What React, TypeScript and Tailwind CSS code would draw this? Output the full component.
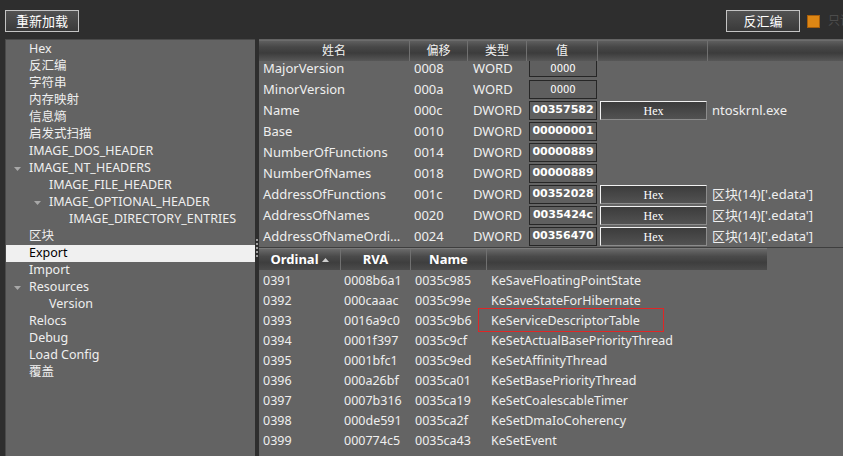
import React from 'react';

type Node = { label: string; level: number; open?: boolean; selected?: boolean };

const tree: Node[] = [
  { label: 'Hex', level: 0 },
  { label: '反汇编', level: 0 },
  { label: '字符串', level: 0 },
  { label: '内存映射', level: 0 },
  { label: '信息熵', level: 0 },
  { label: '启发式扫描', level: 0 },
  { label: 'IMAGE_DOS_HEADER', level: 0 },
  { label: 'IMAGE_NT_HEADERS', level: 0, open: true },
  { label: 'IMAGE_FILE_HEADER', level: 1 },
  { label: 'IMAGE_OPTIONAL_HEADER', level: 1, open: true },
  { label: 'IMAGE_DIRECTORY_ENTRIES', level: 2 },
  { label: '区块', level: 0 },
  { label: 'Export', level: 0, selected: true },
  { label: 'Import', level: 0 },
  { label: 'Resources', level: 0, open: true },
  { label: 'Version', level: 1 },
  { label: 'Relocs', level: 0 },
  { label: 'Debug', level: 0 },
  { label: 'Load Config', level: 0 },
  { label: '覆盖', level: 0 },
];

type Field = { name: string; off: string; type: string; val: string; hex?: boolean; extra?: string };

const fields: Field[] = [
  { name: 'MajorVersion', off: '0008', type: 'WORD', val: '0000' },
  { name: 'MinorVersion', off: '000a', type: 'WORD', val: '0000' },
  { name: 'Name', off: '000c', type: 'DWORD', val: '00357582', hex: true, extra: 'ntoskrnl.exe' },
  { name: 'Base', off: '0010', type: 'DWORD', val: '00000001' },
  { name: 'NumberOfFunctions', off: '0014', type: 'DWORD', val: '00000889' },
  { name: 'NumberOfNames', off: '0018', type: 'DWORD', val: '00000889' },
  { name: 'AddressOfFunctions', off: '001c', type: 'DWORD', val: '00352028', hex: true, extra: "区块(14)['.edata']" },
  { name: 'AddressOfNames', off: '0020', type: 'DWORD', val: '0035424c', hex: true, extra: "区块(14)['.edata']" },
  { name: 'AddressOfNameOrdinals', off: '0024', type: 'DWORD', val: '00356470', hex: true, extra: "区块(14)['.edata']" },
];

const exportsList = [
  ['0391', '0008b6a1', '0035c985', 'KeSaveFloatingPointState'],
  ['0392', '000caaac', '0035c99e', 'KeSaveStateForHibernate'],
  ['0393', '0016a9c0', '0035c9b6', 'KeServiceDescriptorTable'],
  ['0394', '0001f397', '0035c9cf', 'KeSetActualBasePriorityThread'],
  ['0395', '0001bfc1', '0035c9ed', 'KeSetAffinityThread'],
  ['0396', '000a26bf', '0035ca01', 'KeSetBasePriorityThread'],
  ['0397', '0007b316', '0035ca19', 'KeSetCoalescableTimer'],
  ['0398', '000de591', '0035ca2f', 'KeSetDmaIoCoherency'],
  ['0399', '000774c5', '0035ca43', 'KeSetEvent'],
];

const ToolButton = ({ children }: { children: React.ReactNode }) => (
  <button className="w-[74px] h-[22px] shrink-0 border border-[#c4c4c4] bg-[linear-gradient(#525252,#3a3a3a)] text-[13px] text-white leading-none">
    {children}
  </button>
);

const HexButton = () => (
  <div className="h-full flex items-center justify-center border border-t-[#f2f2f2] border-l-[#f2f2f2] border-b-[#8c8c8c] border-r-[#8c8c8c] bg-[linear-gradient(#3c3c3c,#525252)] font-['Liberation_Serif',serif] text-[12px] text-white">
    Hex
  </div>
);

export default function App() {
  return (
    <div className="w-[843px] h-[456px] overflow-hidden bg-[#2e2e2e] flex flex-col font-['Noto_Sans','Noto_Sans_CJK_SC',sans-serif] text-[12px] text-[#efefef]">
      {/* toolbar */}
      <div className="h-[39px] shrink-0 flex items-start pt-[10px] pl-[5px] overflow-hidden">
        <ToolButton>重新加载</ToolButton>
        <div className="ml-[647px] shrink-0 flex items-center">
          <ToolButton>反汇编</ToolButton>
          <span className="ml-[7px] w-[13px] h-[13px] shrink-0 bg-[#dd8614] border border-[#a65e0c]" />
          <span className="ml-[8px] text-[12px] text-[#4c4c4c] whitespace-nowrap">只读</span>
        </div>
      </div>

      <div className="flex-1 flex min-h-0">
        {/* tree */}
        <div className="w-[250px] shrink-0 ml-[5px] bg-[#636363] border-l border-t border-[#4a4a4a] pt-[1px] text-[12.5px]">
          {tree.map((n) => (
            <div
              key={n.label}
              className={`h-[17px] flex items-center whitespace-nowrap ${n.selected ? 'bg-[#f0f0f0] text-black' : ''}`}
            >
              <span className="w-[23px] shrink-0" style={{ marginLeft: n.level * 20 }}>
                {n.open && (
                  <svg width="7" height="4" viewBox="0 0 7 4" className="ml-[8px]">
                    <path d="M0 0h7L3.5 4z" fill="#a8a8a8" />
                  </svg>
                )}
              </span>
              {n.label}
            </div>
          ))}
        </div>

        {/* splitter */}
        <div className="w-[4px] shrink-0 flex items-center justify-center">
          <div className="h-[18px] border-l-2 border-dotted border-[#a0a0a0]" />
        </div>

        {/* right side */}
        <div className="flex-1 flex flex-col bg-[#646464] pt-[1px]">
          {/* header table */}
          <div className="h-[21px] shrink-0 flex bg-[linear-gradient(#5e5e5e,#474747_30%,#3c3c3c_60%,#575757)] border-t border-[#6c6c6c]">
            {['姓名', '偏移', '类型', '值', ''].map((h, i) => (
              <div
                key={i}
                className={`${['w-[151px]', 'w-[58px]', 'w-[59px]', 'w-[71px]', 'w-[110px]'][i]} flex items-center justify-center border-r border-[#707070] text-[#f2f2f2]`}
              >
                {h}
              </div>
            ))}
            <div className="flex-1" />
          </div>
          <div className="h-[186px] shrink-0">
            {fields.map((f, idx) => (
              <div
                key={f.name}
                className={`${idx === 0 ? 'h-[18px] pb-[2px]' : 'h-[21px]'} flex items-center text-[13px] whitespace-nowrap`}
              >
                <div className="w-[151px] pl-[4px] pr-[2px] truncate">{f.name}</div>
                <div className="w-[58px] pl-[4px]">{f.off}</div>
                <div className="w-[59px] pl-[5px]">{f.type}</div>
                <div className={`w-[71px] h-full pl-[2px] pr-[1px] ${idx === 0 ? 'pb-[0px]' : 'py-[1px]'}`}>
                  <div
                    className={`h-full flex items-center justify-center border border-[#262626] bg-[#5f5f5f] text-white ${
                      idx === 0 ? 'border-t-0' : ''
                    } ${
                      f.type === 'DWORD'
                        ? "font-['DejaVu_Sans',sans-serif] font-bold text-[11px]"
                        : "font-['DejaVu_Sans',sans-serif] text-[10px]"
                    }`}
                  >
                    {f.val}
                  </div>
                </div>
                <div className="w-[110px] h-full pl-[2px] pr-[1px] py-[1px]">{f.hex && <HexButton />}</div>
                <div className="pl-[4px]">{f.extra}</div>
              </div>
            ))}
          </div>

          <div className="h-[1px] shrink-0 bg-[#3e3e3e]" />

          {/* exports table */}
          <div className="w-[508px] h-[22px] shrink-0 flex bg-[linear-gradient(#6a6a6a,#4a4a4a_35%,#3e3e3e_65%,#4c4c4c)] border-t border-[#7a7a7a] font-bold text-[13px] text-white">
            <div className="w-[82px] flex items-center justify-center gap-[3px] border-r border-[#707070]">
              Ordinal
              <svg width="7" height="4" viewBox="0 0 7 4">
                <path d="M3.5 0L7 4H0z" fill="#cfcfcf" />
              </svg>
            </div>
            <div className="w-[70px] flex items-center justify-center border-r border-[#707070]">RVA</div>
            <div className="w-[76px] flex items-center justify-center border-r border-[#707070]">Name</div>
            <div className="flex-1" />
          </div>
          <div className="pt-[1px]">
            {exportsList.map((r) => (
              <div key={r[0]} className="h-[20px] flex text-[12.5px] whitespace-nowrap">
                <div className="w-[82px] pl-[4px] flex items-center">{r[0]}</div>
                <div className="w-[70px] pl-[3px] flex items-center">{r[1]}</div>
                <div className="w-[76px] pl-[4px] flex items-center">{r[2]}</div>
                <div className="relative pl-[4px] flex items-center">
                  {r[3]}
                  {r[0] === '0393' && (
                    <span className="absolute z-10 -left-[9px] -top-[3px] w-[186px] h-[24px] border border-[#e02626]" />
                  )}
                </div>
              </div>
            ))}
          </div>
        </div>
      </div>
    </div>
  );
}
